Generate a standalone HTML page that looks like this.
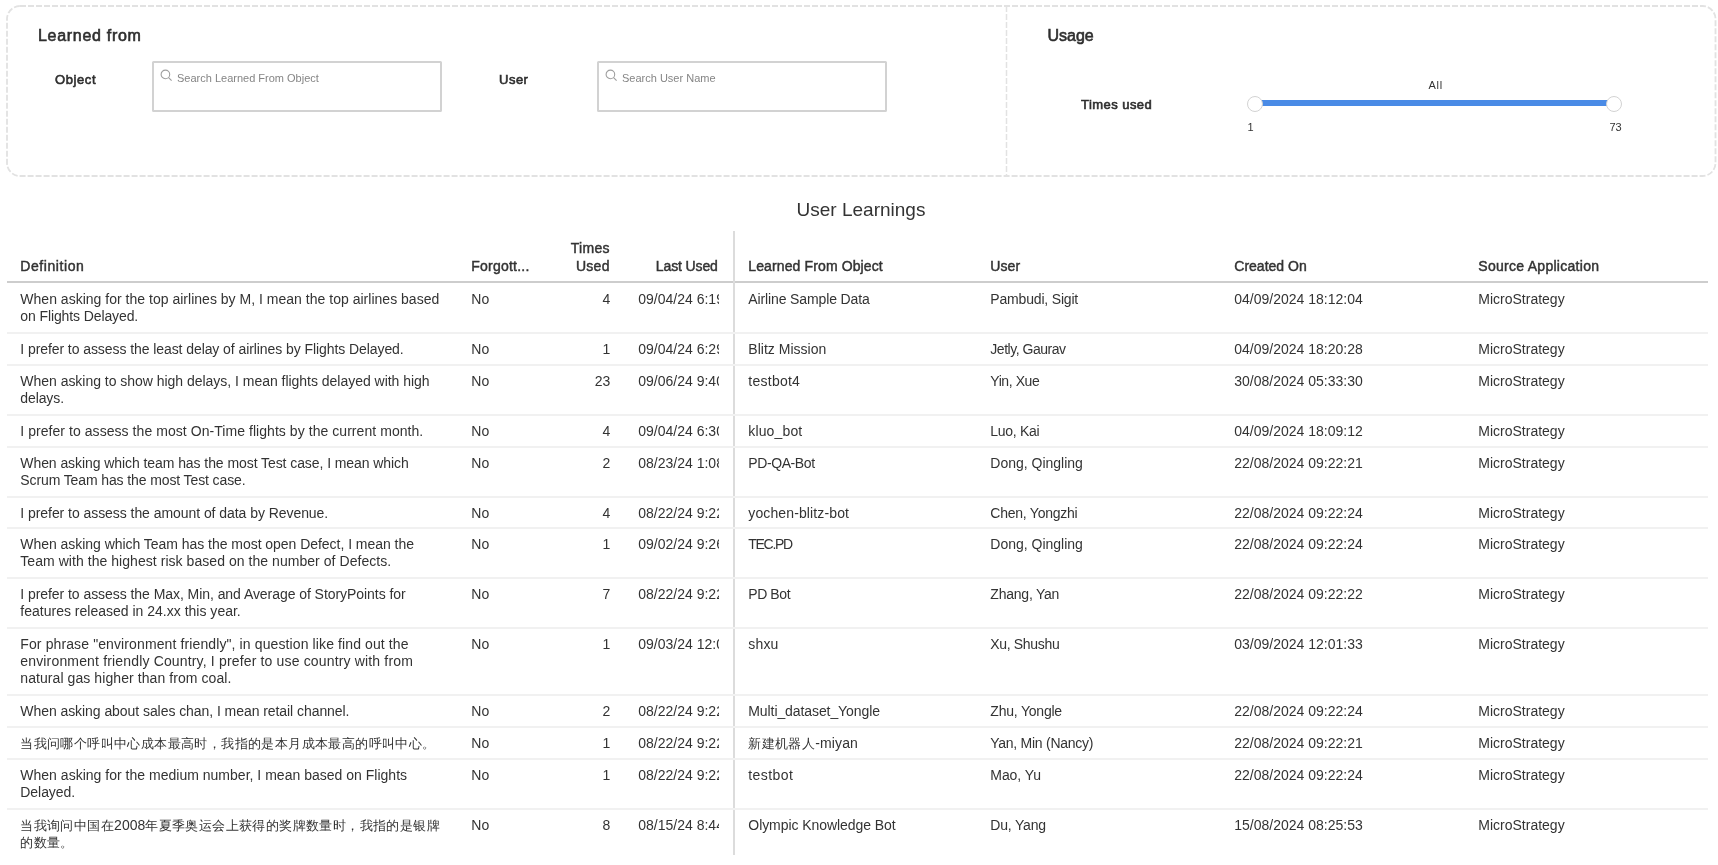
<!DOCTYPE html>
<html><head><meta charset="utf-8"><style>
html,body{margin:0;padding:0;background:#fff;width:1718px;height:865px;overflow:hidden;}
body{font-family:"Liberation Sans",sans-serif;color:#333;position:relative;}
.a{position:absolute;white-space:nowrap;}
.t{font-size:14px;line-height:17.2px;}
.h{font-size:14px;line-height:17.2px;-webkit-text-stroke:0.45px #333;}
.clip{overflow:hidden;}
.cjk{font-size:13px;letter-spacing:0.4px;}
.sep{position:absolute;left:7px;width:1701px;height:2px;background:#f1f1f1;}
#wrap{position:absolute;left:0;top:0;width:1718px;height:865px;will-change:transform;}
</style></head><body><div id="wrap">
<svg class="a" style="left:0;top:0" width="1718" height="190">
<rect x="7" y="6" width="1708.5" height="170" rx="13" ry="13" fill="none" stroke="#e2e2e2" stroke-width="1.8" stroke-dasharray="6 2"/>
<line x1="1006.5" y1="6" x2="1006.5" y2="176" stroke="#e2e2e2" stroke-width="1.5" stroke-dasharray="6 2"/>
</svg>
<div class="a" style="left:38px;top:26.700000000000003px;font-size:16px;line-height:18.40px;font-weight:normal;color:#333;letter-spacing:0.7px;-webkit-text-stroke:0.6px #2e2e2e;color:#2e2e2e;">Learned from</div>
<div class="a" style="left:55px;top:73.4px;font-size:13px;line-height:14.95px;font-weight:normal;color:#333;letter-spacing:0.6px;-webkit-text-stroke:0.6px #2e2e2e;color:#2e2e2e;">Object</div>
<div class="a" style="left:499px;top:73.4px;font-size:13px;line-height:14.95px;font-weight:normal;color:#333;letter-spacing:0.5px;-webkit-text-stroke:0.6px #2e2e2e;color:#2e2e2e;">User</div>
<div class="a" style="left:1047.5px;top:26.700000000000003px;font-size:16px;line-height:18.40px;font-weight:normal;color:#333;letter-spacing:0px;-webkit-text-stroke:0.6px #2e2e2e;color:#2e2e2e;">Usage</div>
<div class="a" style="left:1081px;top:97.8px;font-size:13px;line-height:14.95px;font-weight:normal;color:#333;letter-spacing:0.45px;-webkit-text-stroke:0.6px #2e2e2e;color:#2e2e2e;">Times used</div>
<div class="a" style="left:152px;top:61px;width:286px;height:47px;border:2px solid #d2d2d2;border-radius:1.5px;"></div>
<svg class="a" style="left:159px;top:68px" width="16" height="16"><circle cx="6.4" cy="6.4" r="4.3" fill="none" stroke="#9e9e9e" stroke-width="1.1"/><line x1="9.6" y1="9.6" x2="12.6" y2="12.6" stroke="#9e9e9e" stroke-width="1.1"/></svg>
<div class="a" style="left:177px;top:72px;font-size:11px;line-height:12.65px;font-weight:normal;color:#858585;letter-spacing:0px;">Search Learned From Object</div>
<div class="a" style="left:597px;top:61px;width:286px;height:47px;border:2px solid #d2d2d2;border-radius:1.5px;"></div>
<svg class="a" style="left:604px;top:68px" width="16" height="16"><circle cx="6.4" cy="6.4" r="4.3" fill="none" stroke="#9e9e9e" stroke-width="1.1"/><line x1="9.6" y1="9.6" x2="12.6" y2="12.6" stroke="#9e9e9e" stroke-width="1.1"/></svg>
<div class="a" style="left:622px;top:72px;font-size:11px;line-height:12.65px;font-weight:normal;color:#858585;letter-spacing:0px;">Search User Name</div>
<div class="a" style="left:1256px;top:100.1px;width:354px;height:5.6px;background:#4a8be6;"></div>
<div class="a" style="left:1246.6px;top:95.5px;width:14px;height:14px;border:1.2px solid #d2d2d2;border-radius:50%;background:#fff;"></div>
<div class="a" style="left:1605.6px;top:95.5px;width:14px;height:14px;border:1.2px solid #d2d2d2;border-radius:50%;background:#fff;"></div>
<div class="a" style="left:1428.5px;top:79px;font-size:11px;line-height:12.65px;font-weight:normal;color:#333;letter-spacing:0.7px;">All</div>
<div class="a" style="left:1247.5px;top:121.19999999999999px;font-size:11px;line-height:12.65px;font-weight:normal;color:#333;letter-spacing:0px;">1</div>
<div class="a" style="left:1609.5px;top:121.19999999999999px;font-size:11px;line-height:12.65px;font-weight:normal;color:#333;letter-spacing:0px;">73</div>
<div class="a" style="left:0;width:1722px;text-align:center;top:198.8px;font-size:19px;line-height:22px;">User Learnings</div>
<div class="a" style="left:7px;top:281px;width:1701px;height:2px;background:#cdcdcd;"></div>
<div class="a" style="left:733px;top:230.5px;width:1.6px;height:624.5px;background:#dcdcdc;"></div>
<div class="a h" style="left:20.30px;top:257.60px;letter-spacing:0.57px;">Definition</div>
<div class="a h" style="left:471.30px;top:257.60px;letter-spacing:0.22px;">Forgott...</div>
<div class="a h" style="left:529.80px;width:80px;text-align:right;top:239.30px;line-height:18px;letter-spacing:0.3px;">Times<br>Used</div>
<div class="a h" style="left:627.80px;width:90px;text-align:right;top:257.60px;letter-spacing:-0.12px;">Last Used</div>
<div class="a h" style="left:748.30px;top:257.60px;letter-spacing:0.12px;">Learned From Object</div>
<div class="a h" style="left:990.30px;top:257.60px;letter-spacing:0.1px;">User</div>
<div class="a h" style="left:1234.30px;top:257.60px;letter-spacing:0px;">Created On</div>
<div class="a h" style="left:1478.30px;top:257.60px;letter-spacing:0.28px;">Source Application</div>
<div class="a t" style="left:20.30px;top:290.90px;"><span style="letter-spacing:0.016px">When asking for the top airlines by M, I mean the top airlines based</span><br><span style="letter-spacing:-0.106px">on Flights Delayed.</span></div>
<div class="a t" style="left:471.30px;top:290.90px;">No</div>
<div class="a t" style="left:550.30px;width:60px;text-align:right;top:290.90px;">4</div>
<div class="a t clip" style="left:638.30px;top:290.90px;width:80.4px;">09/04/24 6:19:12 PM</div>
<div class="a t" style="left:748.30px;top:290.90px;letter-spacing:-0.122px;">Airline Sample Data</div>
<div class="a t" style="left:990.30px;top:290.90px;letter-spacing:-0.177px;">Pambudi, Sigit</div>
<div class="a t" style="left:1234.30px;top:290.90px;">04/09/2024 18:12:04</div>
<div class="a t" style="left:1478.30px;top:290.90px;">MicroStrategy</div>
<div class="sep" style="top:332px"></div>
<div class="a t" style="left:20.30px;top:340.90px;"><span style="letter-spacing:-0.075px">I prefer to assess the least delay of airlines by Flights Delayed.</span></div>
<div class="a t" style="left:471.30px;top:340.90px;">No</div>
<div class="a t" style="left:550.30px;width:60px;text-align:right;top:340.90px;">1</div>
<div class="a t clip" style="left:638.30px;top:340.90px;width:80.4px;">09/04/24 6:29:12 PM</div>
<div class="a t" style="left:748.30px;top:340.90px;letter-spacing:0.017px;">Blitz Mission</div>
<div class="a t" style="left:990.30px;top:340.90px;letter-spacing:-0.475px;">Jetly, Gaurav</div>
<div class="a t" style="left:1234.30px;top:340.90px;">04/09/2024 18:20:28</div>
<div class="a t" style="left:1478.30px;top:340.90px;">MicroStrategy</div>
<div class="sep" style="top:364px"></div>
<div class="a t" style="left:20.30px;top:372.90px;"><span style="letter-spacing:-0.025px">When asking to show high delays, I mean flights delayed with high</span><br><span style="letter-spacing:-0.100px">delays.</span></div>
<div class="a t" style="left:471.30px;top:372.90px;">No</div>
<div class="a t" style="left:550.30px;width:60px;text-align:right;top:372.90px;">23</div>
<div class="a t clip" style="left:638.30px;top:372.90px;width:80.4px;">09/06/24 9:40:12 AM</div>
<div class="a t" style="left:748.30px;top:372.90px;letter-spacing:0.257px;">testbot4</div>
<div class="a t" style="left:990.30px;top:372.90px;letter-spacing:-0.429px;">Yin, Xue</div>
<div class="a t" style="left:1234.30px;top:372.90px;">30/08/2024 05:33:30</div>
<div class="a t" style="left:1478.30px;top:372.90px;">MicroStrategy</div>
<div class="sep" style="top:414px"></div>
<div class="a t" style="left:20.30px;top:422.90px;"><span style="letter-spacing:0.055px">I prefer to assess the most On-Time flights by the current month.</span></div>
<div class="a t" style="left:471.30px;top:422.90px;">No</div>
<div class="a t" style="left:550.30px;width:60px;text-align:right;top:422.90px;">4</div>
<div class="a t clip" style="left:638.30px;top:422.90px;width:80.4px;">09/04/24 6:30:12 PM</div>
<div class="a t" style="left:748.30px;top:422.90px;letter-spacing:0.143px;">kluo_bot</div>
<div class="a t" style="left:990.30px;top:422.90px;letter-spacing:-0.286px;">Luo, Kai</div>
<div class="a t" style="left:1234.30px;top:422.90px;">04/09/2024 18:09:12</div>
<div class="a t" style="left:1478.30px;top:422.90px;">MicroStrategy</div>
<div class="sep" style="top:446px"></div>
<div class="a t" style="left:20.30px;top:454.90px;"><span style="letter-spacing:-0.072px">When asking which team has the most Test case, I mean which</span><br><span style="letter-spacing:-0.112px">Scrum Team has the most Test case.</span></div>
<div class="a t" style="left:471.30px;top:454.90px;">No</div>
<div class="a t" style="left:550.30px;width:60px;text-align:right;top:454.90px;">2</div>
<div class="a t clip" style="left:638.30px;top:454.90px;width:80.4px;">08/23/24 1:08:12 AM</div>
<div class="a t" style="left:748.30px;top:454.90px;letter-spacing:-0.412px;">PD-QA-Bot</div>
<div class="a t" style="left:990.30px;top:454.90px;letter-spacing:0.000px;">Dong, Qingling</div>
<div class="a t" style="left:1234.30px;top:454.90px;">22/08/2024 09:22:21</div>
<div class="a t" style="left:1478.30px;top:454.90px;">MicroStrategy</div>
<div class="sep" style="top:496px"></div>
<div class="a t" style="left:20.30px;top:504.90px;"><span style="letter-spacing:-0.054px">I prefer to assess the amount of data by Revenue.</span></div>
<div class="a t" style="left:471.30px;top:504.90px;">No</div>
<div class="a t" style="left:550.30px;width:60px;text-align:right;top:504.90px;">4</div>
<div class="a t clip" style="left:638.30px;top:504.90px;width:80.4px;">08/22/24 9:22:12 AM</div>
<div class="a t" style="left:748.30px;top:504.90px;letter-spacing:0.120px;">yochen-blitz-bot</div>
<div class="a t" style="left:990.30px;top:504.90px;letter-spacing:-0.242px;">Chen, Yongzhi</div>
<div class="a t" style="left:1234.30px;top:504.90px;">22/08/2024 09:22:24</div>
<div class="a t" style="left:1478.30px;top:504.90px;">MicroStrategy</div>
<div class="sep" style="top:527px"></div>
<div class="a t" style="left:20.30px;top:535.90px;"><span style="letter-spacing:-0.038px">When asking which Team has the most open Defect, I mean the</span><br><span style="letter-spacing:0.049px">Team with the highest risk based on the number of Defects.</span></div>
<div class="a t" style="left:471.30px;top:535.90px;">No</div>
<div class="a t" style="left:550.30px;width:60px;text-align:right;top:535.90px;">1</div>
<div class="a t clip" style="left:638.30px;top:535.90px;width:80.4px;">09/02/24 9:26:12 AM</div>
<div class="a t" style="left:748.30px;top:535.90px;letter-spacing:-1.300px;">TEC.PD</div>
<div class="a t" style="left:990.30px;top:535.90px;letter-spacing:0.000px;">Dong, Qingling</div>
<div class="a t" style="left:1234.30px;top:535.90px;">22/08/2024 09:22:24</div>
<div class="a t" style="left:1478.30px;top:535.90px;">MicroStrategy</div>
<div class="sep" style="top:577px"></div>
<div class="a t" style="left:20.30px;top:585.90px;"><span style="letter-spacing:-0.056px">I prefer to assess the Max, Min, and Average of StoryPoints for</span><br><span style="letter-spacing:0.006px">features released in 24.xx this year.</span></div>
<div class="a t" style="left:471.30px;top:585.90px;">No</div>
<div class="a t" style="left:550.30px;width:60px;text-align:right;top:585.90px;">7</div>
<div class="a t clip" style="left:638.30px;top:585.90px;width:80.4px;">08/22/24 9:22:12 AM</div>
<div class="a t" style="left:748.30px;top:585.90px;letter-spacing:-0.420px;">PD Bot</div>
<div class="a t" style="left:990.30px;top:585.90px;letter-spacing:-0.222px;">Zhang, Yan</div>
<div class="a t" style="left:1234.30px;top:585.90px;">22/08/2024 09:22:22</div>
<div class="a t" style="left:1478.30px;top:585.90px;">MicroStrategy</div>
<div class="sep" style="top:627px"></div>
<div class="a t" style="left:20.30px;top:635.90px;"><span style="letter-spacing:0.113px">For phrase &quot;environment friendly&quot;, in question like find out the</span><br><span style="letter-spacing:0.161px">environment friendly Country, I prefer to use country with from</span><br><span style="letter-spacing:0.076px">natural gas higher than from coal.</span></div>
<div class="a t" style="left:471.30px;top:635.90px;">No</div>
<div class="a t" style="left:550.30px;width:60px;text-align:right;top:635.90px;">1</div>
<div class="a t clip" style="left:638.30px;top:635.90px;width:80.4px;">09/03/24 12:01:12 PM</div>
<div class="a t" style="left:748.30px;top:635.90px;letter-spacing:0.167px;">shxu</div>
<div class="a t" style="left:990.30px;top:635.90px;letter-spacing:-0.333px;">Xu, Shushu</div>
<div class="a t" style="left:1234.30px;top:635.90px;">03/09/2024 12:01:33</div>
<div class="a t" style="left:1478.30px;top:635.90px;">MicroStrategy</div>
<div class="sep" style="top:694px"></div>
<div class="a t" style="left:20.30px;top:702.90px;"><span style="letter-spacing:-0.061px">When asking about sales chan, I mean retail channel.</span></div>
<div class="a t" style="left:471.30px;top:702.90px;">No</div>
<div class="a t" style="left:550.30px;width:60px;text-align:right;top:702.90px;">2</div>
<div class="a t clip" style="left:638.30px;top:702.90px;width:80.4px;">08/22/24 9:22:12 AM</div>
<div class="a t" style="left:748.30px;top:702.90px;letter-spacing:-0.089px;">Multi_dataset_Yongle</div>
<div class="a t" style="left:990.30px;top:702.90px;letter-spacing:-0.210px;">Zhu, Yongle</div>
<div class="a t" style="left:1234.30px;top:702.90px;">22/08/2024 09:22:24</div>
<div class="a t" style="left:1478.30px;top:702.90px;">MicroStrategy</div>
<div class="sep" style="top:726px"></div>
<div class="a t" style="left:20.30px;top:734.90px;"><span style="letter-spacing:0.000px"><span class="cjk">当我问哪个呼叫中心成本最高时，我指的是本月成本最高的呼叫中心。</span></span></div>
<div class="a t" style="left:471.30px;top:734.90px;">No</div>
<div class="a t" style="left:550.30px;width:60px;text-align:right;top:734.90px;">1</div>
<div class="a t clip" style="left:638.30px;top:734.90px;width:80.4px;">08/22/24 9:22:12 AM</div>
<div class="a t" style="left:748.30px;top:734.90px;letter-spacing:0.100px;"><span class="cjk">新建机器人</span>-miyan</div>
<div class="a t" style="left:990.30px;top:734.90px;letter-spacing:-0.267px;">Yan, Min (Nancy)</div>
<div class="a t" style="left:1234.30px;top:734.90px;">22/08/2024 09:22:21</div>
<div class="a t" style="left:1478.30px;top:734.90px;">MicroStrategy</div>
<div class="sep" style="top:758px"></div>
<div class="a t" style="left:20.30px;top:766.90px;"><span style="letter-spacing:0.014px">When asking for the medium number, I mean based on Flights</span><br><span style="letter-spacing:-0.057px">Delayed.</span></div>
<div class="a t" style="left:471.30px;top:766.90px;">No</div>
<div class="a t" style="left:550.30px;width:60px;text-align:right;top:766.90px;">1</div>
<div class="a t clip" style="left:638.30px;top:766.90px;width:80.4px;">08/22/24 9:22:12 AM</div>
<div class="a t" style="left:748.30px;top:766.90px;letter-spacing:0.417px;">testbot</div>
<div class="a t" style="left:990.30px;top:766.90px;letter-spacing:-0.067px;">Mao, Yu</div>
<div class="a t" style="left:1234.30px;top:766.90px;">22/08/2024 09:22:24</div>
<div class="a t" style="left:1478.30px;top:766.90px;">MicroStrategy</div>
<div class="sep" style="top:808px"></div>
<div class="a t" style="left:20.30px;top:816.90px;"><span style="letter-spacing:0.000px"><span class="cjk">当我询问中国在</span>2008<span class="cjk">年夏季奥运会上获得的奖牌数量时，我指的是银牌</span></span><br><span style="letter-spacing:0.000px"><span class="cjk">的数量。</span></span></div>
<div class="a t" style="left:471.30px;top:816.90px;">No</div>
<div class="a t" style="left:550.30px;width:60px;text-align:right;top:816.90px;">8</div>
<div class="a t clip" style="left:638.30px;top:816.90px;width:80.4px;">08/15/24 8:44:12 AM</div>
<div class="a t" style="left:748.30px;top:816.90px;letter-spacing:-0.060px;">Olympic Knowledge Bot</div>
<div class="a t" style="left:990.30px;top:816.90px;letter-spacing:-0.186px;">Du, Yang</div>
<div class="a t" style="left:1234.30px;top:816.90px;">15/08/2024 08:25:53</div>
<div class="a t" style="left:1478.30px;top:816.90px;">MicroStrategy</div>
</div></body></html>
